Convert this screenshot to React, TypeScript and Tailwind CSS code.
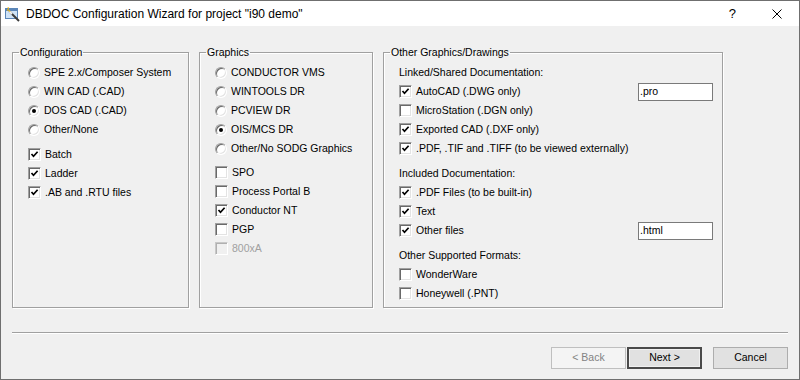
import React from "react";

const font = { fontFamily: '"Liberation Sans", Arial, sans-serif' };

function Radio({ label, checked = false }: { label: string; checked?: boolean }) {
  return (
    <div className="flex h-[19px] items-center">
      <span className="flex h-[12px] w-[12px] items-center justify-center rounded-full border border-[#a0a0a0] border-r-white border-b-white bg-white shadow-[inset_1px_1px_0_#696969,inset_-1px_-1px_0_#e3e3e3]">
        {checked && <span className="h-[4px] w-[4px] rounded-full bg-black" />}
      </span>
      <span className="ml-[4px] text-black">{label}</span>
    </div>
  );
}

function Check({
  label,
  checked = false,
  disabled = false,
  children,
}: {
  label: string;
  checked?: boolean;
  disabled?: boolean;
  children?: React.ReactNode;
}) {
  return (
    <div className="flex h-[19px] items-center">
      <span
        className={
          disabled
            ? "flex h-[13px] w-[13px] items-center justify-center border border-[#c8c8c8] border-r-white border-b-white bg-[#f0f0f0] shadow-[inset_1px_1px_0_#b0b0b0]"
            : "flex h-[13px] w-[13px] items-center justify-center border border-[#a0a0a0] border-r-white border-b-white bg-white shadow-[inset_1px_1px_0_#696969,inset_-1px_-1px_0_#e3e3e3]"
        }
      >
        {checked && (
          <svg width="9" height="9" viewBox="0 0 9 9">
            <path d="M1.5 4 L3.5 6.3 L7.6 1.8" fill="none" stroke="black" strokeWidth="1.7" />
          </svg>
        )}
      </span>
      <span className={disabled ? "ml-[4px] text-[#a0a0a0]" : "ml-[4px] text-black"}>{label}</span>
      {children}
    </div>
  );
}

function Field({ value }: { value: string }) {
  return (
    <div className="ml-auto flex h-[18px] w-[75px] items-center border border-[#7a7a7a] bg-white pl-[1px] text-black">
      {value}
    </div>
  );
}

function Group({ title, className, children }: { title: string; className: string; children: React.ReactNode }) {
  return (
    <fieldset
      className={
        "h-[262px] border border-[#a0a0a0] pl-[15px] shadow-[inset_1px_1px_0_white,1px_1px_0_white] " + className
      }
    >
      <legend className="ml-[-9px] px-[1px] leading-[13px]">{title}</legend>
      {children}
    </fieldset>
  );
}

function WizardIcon() {
  return (
    <svg width="16" height="16" viewBox="0 0 16 16">
      <rect x="0.5" y="2.5" width="12" height="10" fill="#cfe3f7" stroke="#5b86b8" />
      <rect x="1" y="3" width="11" height="2" fill="#5b86b8" />
      <path d="M4 5 L14 15" stroke="#3b3b3b" strokeWidth="2" />
      <path d="M4 5 L7 8" stroke="#f2f2f2" strokeWidth="2" />
      <path d="M3 1 L3.6 3 L2 4 L4.2 4.2 L5 6" fill="none" stroke="#f0b400" strokeWidth="0.9" />
    </svg>
  );
}

export default function App() {
  return (
    <div className="flex h-[380px] w-[800px] flex-col border border-[#6f6f6f] bg-[#f0f0f0] text-[10.5px]" style={font}>
      <div className="flex h-[25px] shrink-0 items-center bg-white">
        <div className="ml-[4px]">
          <WizardIcon />
        </div>
        <span className="ml-[5px] text-[12px] text-black">DBDOC Configuration Wizard for project "i90 demo"</span>
        <span className="ml-auto mr-[36px] text-[13px] text-black">?</span>
        <svg className="mr-[17px]" width="10" height="10" viewBox="0 0 10 10">
          <path d="M0.5 0.5 L9.5 9.5 M9.5 0.5 L0.5 9.5" stroke="black" strokeWidth="1" />
        </svg>
      </div>

      <div className="flex flex-1 flex-col px-[11px]">
        <div className="mt-[20px] flex">
          <Group title="Configuration" className="w-[177px]">
            <div className="mt-[4px]">
              <Radio label="SPE 2.x/Composer System" />
              <Radio label="WIN CAD (.CAD)" />
              <Radio label="DOS CAD (.CAD)" checked />
              <Radio label="Other/None" />
            </div>
            <div className="mt-[6px]">
              <Check label="Batch" checked />
              <Check label="Ladder" checked />
              <Check label=".AB and .RTU files" checked />
            </div>
          </Group>

          <Group title="Graphics" className="ml-[10px] w-[174px]">
            <div className="mt-[4px]">
              <Radio label="CONDUCTOR VMS" />
              <Radio label="WINTOOLS DR" />
              <Radio label="PCVIEW DR" />
              <Radio label="OIS/MCS DR" checked />
              <Radio label="Other/No SODG Graphics" />
            </div>
            <div className="mt-[5px]">
              <Check label="SPO" />
              <Check label="Process Portal B" />
              <Check label="Conductor NT" checked />
              <Check label="PGP" />
              <Check label="800xA" disabled />
            </div>
          </Group>

          <Group title="Other Graphics/Drawings" className="ml-[10px] w-[340px] pr-[9px]">
            <div className="mt-[4px]">
              <div className="flex h-[19px] items-center">Linked/Shared Documentation:</div>
              <Check label="AutoCAD (.DWG only)" checked>
                <Field value=".pro" />
              </Check>
              <Check label="MicroStation (.DGN only)" />
              <Check label="Exported CAD (.DXF only)" checked />
              <Check label=".PDF, .TIF and .TIFF (to be viewed externally)" checked />
            </div>
            <div className="mt-[6px]">
              <div className="flex h-[19px] items-center">Included Documentation:</div>
              <Check label=".PDF Files (to be built-in)" checked />
              <Check label="Text" checked />
              <Check label="Other files" checked>
                <Field value=".html" />
              </Check>
            </div>
            <div className="mt-[6px]">
              <div className="flex h-[19px] items-center">Other Supported Formats:</div>
              <Check label="WonderWare" />
              <Check label="Honeywell (.PNT)" />
            </div>
          </Group>
        </div>

        <div className="mt-[24px] h-[2px] border-t border-b border-t-[#a0a0a0] border-b-white" />

        <div className="mt-[13px] flex justify-end">
          <button className="flex h-[22px] w-[75px] items-center justify-center border border-[#bfbfbf] bg-[#f4f4f4] text-[#838383]">
            &lt; Back
          </button>
          <button className="ml-[1px] flex h-[22px] w-[75px] items-center justify-center border-2 border-[#4a4a4a] bg-[#e1e1e1] text-black shadow-[inset_0_0_0_1px_#f0f0f0]">
            Next &gt;
          </button>
          <button className="ml-[11px] flex h-[22px] w-[75px] items-center justify-center border border-[#adadad] bg-[#e1e1e1] text-black">
            Cancel
          </button>
        </div>
      </div>
    </div>
  );
}
